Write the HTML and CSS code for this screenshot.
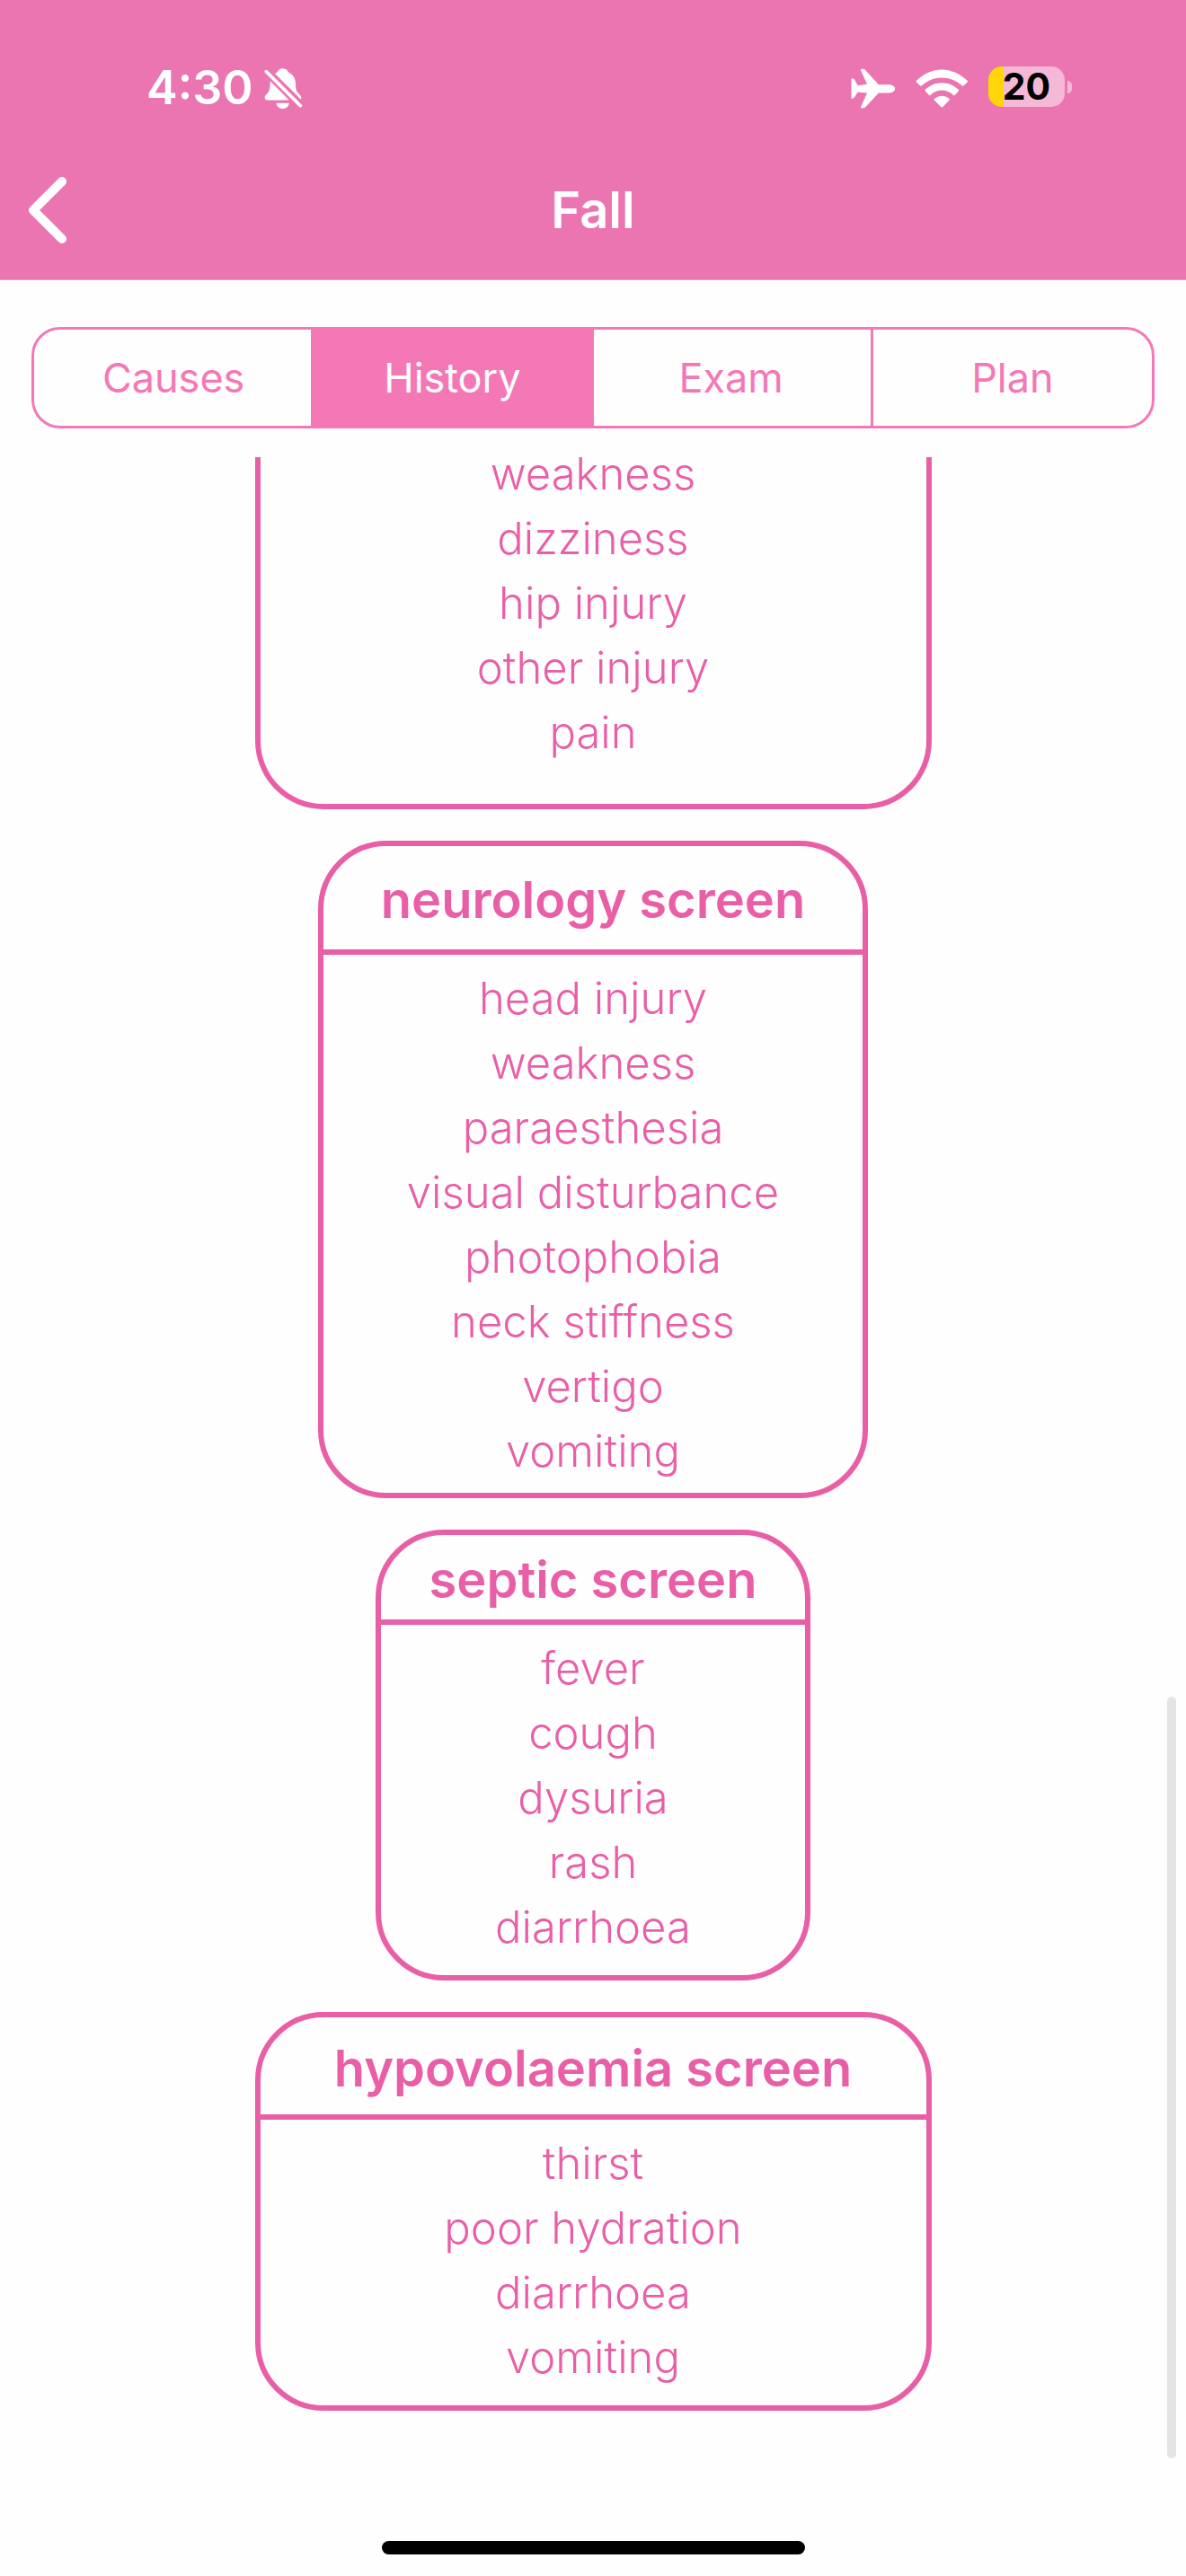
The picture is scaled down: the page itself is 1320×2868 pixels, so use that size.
FILE: index.html
```html
<!DOCTYPE html>
<html lang="en">
<head>
<meta charset="utf-8">
<meta name="viewport" content="width=device-width, initial-scale=1">
<title>Fall</title>
<link rel="stylesheet" href="styles.css">
</head>
<body>
<header class="header">
  <div class="status">
    <div class="status-side">
      <span class="time">4:30</span>
      <svg class="bell" viewBox="880 104 130 140" aria-hidden="true">
        <path d="M917 125C922 121 924 119 926 116C929 110 935 107 942 107C950 107 956 110 959 115C961 119 964 121 968 123C980 130 986 143 986 160C986 176 988 183 994 189C1001 196 1005 200 1005 206Q1005 209 1003 210Z"/>
        <path d="M901 150L964 213H892C886 213 882 210 882 205C882 198 887 194 892 189C899 182 899 171 901 150Z"/>
        <path d="M921 223H964C962 235 954 242 942 242C931 242 923 235 921 223Z"/>
        <path class="line" d="M887 117L1002 232"/>
      </svg>
    </div>
    <div class="status-side">
      <svg class="plane" viewBox="140 106 150 136" aria-hidden="true">
        <path d="M172 111Q173 108 177 108H182Q185 108 188 112L233 161H268C280 161 288 168 288 175C288 182 280 189 268 189H233L189 236Q185 240 182 240H175Q171 240 173 236L194 189L163 186L152 203Q149 208 145 208H141V141H146Q150 141 152 145L163 164L194 160Z"/>
      </svg>
      <svg class="wifi" viewBox="358 104 176 128" aria-hidden="true">
        <path d="M361 142C384 119 414 105 445 105S507 119 530 142Q532 144 530 147L518 158Q515 161 512 158C493 141 470 132 445 132S398 141 379 158Q376 161 373 158L361 147Q359 144 361 142Z"/>
        <path d="M390 172C405 157 424 149 445 149S486 157 501 172Q502 174 501 176L488 190Q486 192 484 190C473 180 460 174 445 174S418 180 407 190Q405 192 403 190L390 176Q389 174 390 172Z"/>
        <path d="M420 203C435 189 456 189 471 203Q472 205 470 207L448 230Q446 232 443 230L420 207Q419 205 420 203Z"/>
      </svg>
      <div class="battery"><span class="battery-level">20</span></div>
    </div>
  </div>
  <div class="navbar">
    <button class="back" type="button" aria-label="Back">
      <svg class="chevron" viewBox="0 0 43 74" aria-hidden="true"><path d="M38 5L6 37L38 69"/></svg>
    </button>
    <h1 class="title">Fall</h1>
  </div>
</header>

<div class="tabs" role="tablist">
  <button class="tab" type="button" role="tab" aria-selected="false">Causes</button>
  <button class="tab tab-active" type="button" role="tab" aria-selected="true">History</button>
  <button class="tab" type="button" role="tab" aria-selected="false">Exam</button>
  <button class="tab tab-divided" type="button" role="tab" aria-selected="false">Plan</button>
</div>

<main class="scroller">
  <section class="card card-wide card-scrolled">
    <ul class="items">
      <li>weakness</li>
      <li>dizziness</li>
      <li>hip injury</li>
      <li>other injury</li>
      <li>pain</li>
    </ul>
  </section>
  <section class="card card-medium">
    <h2 class="card-title title-tall">neurology screen</h2>
    <ul class="items">
      <li>head injury</li>
      <li>weakness</li>
      <li>paraesthesia</li>
      <li>visual disturbance</li>
      <li>photophobia</li>
      <li>neck stiffness</li>
      <li>vertigo</li>
      <li>vomiting</li>
    </ul>
  </section>
  <section class="card card-narrow">
    <h2 class="card-title title-short">septic screen</h2>
    <ul class="items">
      <li>fever</li>
      <li>cough</li>
      <li>dysuria</li>
      <li>rash</li>
      <li>diarrhoea</li>
    </ul>
  </section>
  <section class="card card-wide">
    <h2 class="card-title">hypovolaemia screen</h2>
    <ul class="items">
      <li>thirst</li>
      <li>poor hydration</li>
      <li>diarrhoea</li>
      <li>vomiting</li>
    </ul>
  </section>
  <div class="scrollbar"></div>
</main>

<footer class="home"><div class="home-bar"></div></footer>
</body>
</html>
```

FILE: styles.css
```css
:root {
  --header: #eb75b0;
  --tab: #f578b6;
  --ink: #e95fa7;
}

* {
  box-sizing: border-box;
}

body {
  margin: 0;
  min-height: 100vh;
  display: flex;
  flex-direction: column;
  background: #fefefe;
  font-family: Inter, "Liberation Sans", sans-serif;
}

button {
  padding: 0;
  border: 0;
  background: none;
  font: inherit;
}

svg {
  display: block;
  fill: #fff;
}

/* Status bar and navigation bar */
.header {
  background: var(--header);
  border-bottom: 1px solid #c0b4ba;
  color: #fff;
}

.status {
  display: flex;
  justify-content: space-between;
  align-items: flex-end;
  height: 122px;
  padding: 0 135px 0 163px;
}

.status-side {
  display: flex;
  align-items: center;
  gap: 12px;
  height: 48px;
}

.status-side:last-child {
  gap: 22px;
}

.time {
  font-size: 52px;
  line-height: 48px;
  font-weight: 600;
}

.bell {
  width: 43px;
  height: 47px;
}

.bell .line {
  fill: none;
  stroke: #fff;
  stroke-width: 11;
  stroke-linecap: round;
}

.plane {
  width: 50px;
  height: 45px;
}

.wifi {
  width: 59px;
  height: 43px;
}

.battery {
  position: relative;
  width: 85px;
  height: 45px;
  margin-bottom: 3px;
  border-radius: 15px;
  background: linear-gradient(to right, #ffd60a 17px, #f5b9d7 17px);
  color: #000;
  text-align: center;
}

.battery::after {
  content: "";
  position: absolute;
  left: 88px;
  top: 16px;
  width: 5px;
  height: 14px;
  border-radius: 0 7px 7px 0;
  background: #f5b9d7;
}

.battery-level {
  display: block;
  font-size: 41px;
  line-height: 45px;
  font-weight: 700;
}

.navbar {
  display: grid;
  grid-template-columns: 1fr auto 1fr;
  align-items: center;
  height: 189px;
  padding: 34px 31px 0;
}

.back {
  justify-self: start;
  cursor: pointer;
}

.chevron {
  width: 43px;
  height: 74px;
  fill: none;
  stroke: #fff;
  stroke-width: 10;
  stroke-linecap: round;
  stroke-linejoin: round;
}

.title {
  margin: 0;
  font-size: 56px;
  line-height: 72px;
  font-weight: 600;
}

/* Segmented control */
.tabs {
  display: flex;
  height: 113px;
  margin: 52px 35px 32px;
  border: 3px solid var(--tab);
  border-radius: 32px;
}

.tab {
  flex: 1 1 0;
  color: var(--tab);
  font-size: 45px;
  line-height: 72px;
  cursor: pointer;
}

.tab-active {
  background: var(--tab);
  box-shadow: -2px 0 var(--tab), 2px 0 var(--tab);
  color: #fff;
}

.tab-divided {
  border-left: 3px solid var(--tab);
}

/* Scrolled list of cards */
.scroller {
  position: relative;
  flex: 1;
  display: flex;
  flex-direction: column;
  align-items: center;
  gap: 35px;
  color: var(--ink);
}

.card {
  width: 100%;
  flex: none;
  border: 6px solid var(--ink);
  border-radius: 76px;
}

.card-wide {
  max-width: 753px;
  padding-bottom: 7px;
}

.card-medium {
  max-width: 612px;
}

.card-narrow {
  max-width: 484px;
  padding-bottom: 7px;
}

.card-scrolled {
  display: flow-root;
  padding-bottom: 33px;
  border-top: 0;
  border-top-left-radius: 0;
  border-top-right-radius: 0;
}

.card-scrolled .items {
  margin-top: -30px;
}

.card-title {
  margin: 0;
  padding-top: 6px;
  border-bottom: 6px solid var(--ink);
  font-size: 56px;
  line-height: 102px;
  font-weight: 600;
  text-align: center;
}

.title-tall {
  line-height: 109px;
}

.title-short {
  line-height: 88px;
}

.items {
  margin: 0;
  padding: 13px 0 10px;
  list-style: none;
  font-size: 49px;
  line-height: 72px;
  font-weight: 300;
  text-align: center;
}

.scrollbar {
  position: absolute;
  right: 11px;
  bottom: 92px;
  width: 10px;
  height: 848px;
  border-radius: 5px;
  background: #e4e4e4;
}

/* Home indicator */
.home {
  display: flex;
  justify-content: center;
  padding-bottom: 24px;
}

.home-bar {
  width: 471px;
  height: 15px;
  border-radius: 8px;
  background: #000;
}
```
